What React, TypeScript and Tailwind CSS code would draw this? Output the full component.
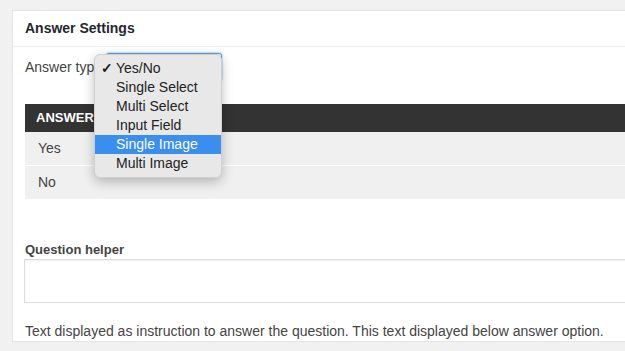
const options = [
  "Yes/No",
  "Single Select",
  "Multi Select",
  "Input Field",
  "Single Image",
  "Multi Image",
];

export default function App() {
  const selected = "Yes/No";
  const hovered = "Single Image";

  return (
    <div className="relative h-[351px] w-[625px] overflow-hidden bg-[#f1f1f1] pl-3 pt-[10px] font-['Liberation_Sans',Arial,sans-serif] text-[#444]">
      {/* PANEL */}
      <div className="w-[640px] border border-[#e5e5e5] bg-white">
        <div className="flex h-[36px] items-center border-b border-[#eee] px-3">
          <h2 className="text-[14px] font-bold text-[#23282d]">Answer Settings</h2>
        </div>

        <div className="px-3 pt-[6px]">
          {/* ANSWER TYPE */}
          <div className="flex h-[28px] items-center gap-[4px]">
            <label className="text-[14px]">Answer type</label>
            <div className="h-[28px] w-[116px] rounded-[3px] border border-[#5b9dd9] bg-white shadow-[0_0_2px_rgba(30,140,190,0.8)]" />
          </div>

          {/* TABLE */}
          <div className="mt-[23px]">
            <div className="flex h-[28px] items-center bg-[#333] px-[11px] text-[13px] font-bold uppercase text-white">
              Answer
            </div>
            <div className="flex h-[34px] items-center border-b border-white bg-[#f0f0f0] px-[13px] text-[14px]">
              Yes
            </div>
            <div className="flex h-[33px] items-center bg-[#f0f0f0] px-[13px] text-[14px]">
              No
            </div>
          </div>

          {/* QUESTION HELPER */}
          <div className="mt-[42px] text-[13px] font-bold leading-[18px]">Question helper</div>
          <div className="-ml-px h-[44px] border border-[#ddd] bg-white shadow-[inset_0_1px_2px_rgba(0,0,0,0.07)]" />
          <p className="mt-[18px] text-[14px] leading-[20px]">
            Text displayed as instruction to answer the question. This text displayed below answer option.
          </p>
        </div>
      </div>

      {/* DROPDOWN MENU */}
      <div className="absolute left-[94px] top-[54px] w-[128px] rounded-[6px] border border-[#cfcfcf] bg-[#e8e8e8] py-[4px] shadow-[0_4px_12px_rgba(0,0,0,0.25)]">
        {options.map((o) => (
          <div
            key={o}
            className={`relative flex h-[19px] items-center pl-[21px] text-[14px] ${
              o === hovered ? "bg-[#3a8ef0] text-white" : "text-[#222]"
            }`}
          >
            {o === selected && (
              <span className="absolute left-[6px] text-[14px] font-bold">✓</span>
            )}
            {o}
          </div>
        ))}
      </div>
    </div>
  );
}
